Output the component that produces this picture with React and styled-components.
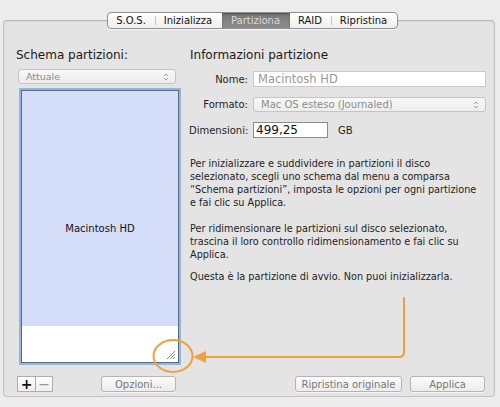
import React from "react";
import styled, { createGlobalStyle } from "styled-components";

const GlobalStyle = createGlobalStyle`
  html, body { margin: 0; padding: 0; background: #ececec; }
  body { font-family: "DejaVu Sans", "Liberation Sans", sans-serif; color: #1e1e1e; }
  * { box-sizing: border-box; }
`;

const Window = styled.div`
  position: relative;
  width: 500px;
  height: 407px;
  padding: 20px 5px 10px 3px;
  background: #ececec;
`;

const Panel = styled.div`
  height: 100%;
  display: flex;
  flex-direction: column;
  border: 1px solid #c2c2c2;
  border-top-color: #b6b6b6;
  border-radius: 4px;
  background: #e4e4e4;
  box-shadow: inset 0 1px 2px rgba(0, 0, 0, 0.05);
  padding: 0 9px 4px 12px;
`;

const TabBar = styled.div`
  align-self: center;
  display: flex;
  height: 17px;
  margin-top: -9px;
  margin-left: 3px;
  border: 1px solid #8f8f8f;
  border-radius: 4px;
  background: linear-gradient(#ffffff, #eeeeee);
  box-shadow: 0 1px 0 rgba(255, 255, 255, 0.7);
  overflow: hidden;
`;

const Tab = styled.div`
  position: relative;
  width: ${(p) => p.$w}px;
  display: flex;
  align-items: center;
  justify-content: center;
  font-size: 10px;
  color: ${(p) => (p.$active ? "#d9d9d9" : "#111")};
  background: ${(p) =>
    p.$active ? "linear-gradient(#767676, #8e8e8e)" : "transparent"};
  box-shadow: ${(p) => (p.$active ? "inset 0 1px 2px rgba(0,0,0,0.35)" : "none")};
  &::before {
    content: "";
    display: ${(p) => (p.$sep ? "block" : "none")};
    position: absolute;
    left: 0;
    top: 3px;
    bottom: 3px;
    width: 1px;
    background: #c6c6c6;
  }
`;

const Body = styled.div`
  flex: 1;
  margin-top: 18px;
  display: grid;
  grid-template-columns: 164px 297px;
  grid-template-rows: 1fr auto;
  column-gap: 9px;
  row-gap: 12px;
`;

const Column = styled.div`
  display: flex;
  flex-direction: column;
  min-height: 0;
`;

const Heading = styled.div`
  font-size: 12px;
  line-height: 16px;
  height: 16px;
  color: #1a1a1a;
  margin-left: ${(p) => p.$indent || 0}px;
`;

const Popup = styled.div`
  position: relative;
  display: flex;
  align-items: center;
  height: ${(p) => p.$h}px;
  margin: ${(p) => p.$m || "0"};
  width: ${(p) => (p.$w ? `${p.$w}px` : "auto")};
  padding-left: ${(p) => p.$pad}px;
  border: 1px solid #c4c4c4;
  border-radius: 3px;
  background: linear-gradient(#f8f8f8, #ededed);
  font-size: ${(p) => p.$fs}px;
  color: #8c8c8c;
  white-space: nowrap;
`;

const Arrows = styled.svg`
  position: absolute;
  right: 6px;
  top: 50%;
  margin-top: -4px;
`;

const PartitionMap = styled.div`
  position: relative;
  flex: 1;
  margin: 6px 1px 1px 5px;
  display: flex;
  flex-direction: column;
  border: 1px solid #5c6a7c;
  box-shadow: 0 0 0 2px #93b5e1;
  background: #fff;
`;

const PartitionBlock = styled.div`
  height: 235px;
  display: flex;
  align-items: center;
  justify-content: center;
  padding-top: 40px;
  background: #d5def9;
  font-size: 10px;
  color: #111;
`;

const FreeSpace = styled.div`
  flex: 1;
  background: #fff;
`;

const Grip = styled.svg`
  position: absolute;
  right: 2px;
  bottom: 2px;
`;

const Footer = styled.div`
  display: flex;
  align-items: center;
  justify-content: ${(p) => p.$justify};
  gap: 8px;
  height: 16px;
  padding: ${(p) => p.$pad};
`;

const Segmented = styled.div`
  display: flex;
  height: 16px;
`;

const SegButton = styled.div`
  width: ${(p) => p.$w}px;
  display: flex;
  align-items: center;
  justify-content: center;
  border: 1px solid #adadad;
  border-left-width: ${(p) => (p.$first ? 1 : 0)}px;
  background: linear-gradient(#ffffff, #eeeeee);
  color: ${(p) => (p.$dim ? "#9a9a9a" : "#111")};
  font-size: 14px;
  font-weight: ${(p) => (p.$dim ? 400 : 700)};
  line-height: 1;
`;

const Button = styled.div`
  width: ${(p) => p.$w}px;
  height: 16px;
  display: flex;
  align-items: center;
  justify-content: center;
  border: 1px solid #b4b4b4;
  border-radius: 3px;
  background: linear-gradient(#fbfbfb, #ececec);
  box-shadow: 0 1px 0 rgba(255, 255, 255, 0.6);
  font-size: 10px;
  color: #777;
  white-space: nowrap;
`;

const Form = styled.div`
  margin-top: 8px;
  display: grid;
  grid-template-columns: 59px 1fr;
  column-gap: 5px;
  row-gap: 10px;
  align-items: center;
`;

const Label = styled.div`
  text-align: right;
  font-size: 10px;
  color: #1e1e1e;
  white-space: nowrap;
`;

const Field = styled.div`
  height: 16px;
  display: flex;
  align-items: center;
  padding-left: ${(p) => p.$pad}px;
  width: ${(p) => (p.$w ? `${p.$w}px` : "auto")};
  border: 1px solid ${(p) => (p.$enabled ? "#8d8d8d" : "#c9c9c9")};
  background: #fff;
  font-size: ${(p) => p.$fs}px;
  color: ${(p) => (p.$enabled ? "#111" : "#999")};
  white-space: nowrap;
`;

const SizeRow = styled.div`
  display: flex;
  align-items: center;
  gap: 10px;
`;

const Unit = styled.span`
  font-size: 10px;
  color: #1e1e1e;
`;

const Note = styled.p`
  margin: ${(p) => p.$top}px 0 0 1px;
  font-size: 9.7px;
  line-height: 13px;
  color: #1e1e1e;
  white-space: nowrap;
`;

const Annotation = styled.svg`
  position: absolute;
  left: 0;
  top: 0;
  pointer-events: none;
`;

const tabs = [
  { label: "S.O.S.", w: 47 },
  { label: "Inizializza", w: 67 },
  { label: "Partiziona", w: 68, active: true },
  { label: "RAID", w: 41 },
  { label: "Ripristina", w: 66 },
];

const UpDown = () => (
  <Arrows width="6" height="8" viewBox="0 0 6 8">
    <path d="M1 3 L3 1 L5 3" fill="none" stroke="#a0a0a0" strokeWidth="1" />
    <path d="M1 5 L3 7 L5 5" fill="none" stroke="#a0a0a0" strokeWidth="1" />
  </Arrows>
);

export default function App() {
  return (
    <>
      <GlobalStyle />
      <Window>
        <Panel>
          <TabBar>
            {tabs.map((t, i) => (
              <Tab
                key={t.label}
                $w={t.w}
                $active={t.active}
                $sep={i > 0 && !t.active && !tabs[i - 1].active}
              >
                {t.label}
              </Tab>
            ))}
          </TabBar>

          <Body>
            <Column>
              <Heading>Schema partizioni:</Heading>
              <Popup $h={15} $w={158} $m="6px 0 0 2px" $pad={7} $fs={9.5}>
                Attuale
                <UpDown />
              </Popup>
              <PartitionMap>
                <PartitionBlock>Macintosh HD</PartitionBlock>
                <FreeSpace />
                <Grip width="11" height="11" viewBox="0 0 11 11">
                  <path
                    d="M10 2 L2 10 M10 5 L5 10 M10 8 L8 10"
                    stroke="#8a8a8a"
                    strokeWidth="1"
                  />
                </Grip>
              </PartitionMap>
            </Column>

            <Column>
              <Heading $indent={1}>Informazioni partizione</Heading>
              <Form>
                <Label>Nome:</Label>
                <Field $pad={4} $fs={11.5}>Macintosh HD</Field>
                <Label>Formato:</Label>
                <Popup $h={15} $pad={7} $fs={10}>
                  Mac OS esteso (Journaled)
                  <UpDown />
                </Popup>
                <Label>Dimensioni:</Label>
                <SizeRow>
                  <Field $enabled $w={75} $pad={2} $fs={12}>499,25</Field>
                  <Unit>GB</Unit>
                </SizeRow>
              </Form>
              <Note $top={19}>
                Per inizializzare e suddividere in partizioni il disco
                <br />
                selezionato, scegli uno schema dal menu a comparsa
                <br />
                “Schema partizioni”, imposta le opzioni per ogni partizione
                <br />e fai clic su Applica.
              </Note>
              <Note $top={13}>
                Per ridimensionare le partizioni sul disco selezionato,
                <br />
                trascina il loro controllo ridimensionamento e fai clic su
                <br />
                Applica.
              </Note>
              <Note $top={9}>
                Questa è la partizione di avvio. Non puoi inizializzarla.
              </Note>
            </Column>

            <Footer $justify="space-between" $pad="0 4px 0 1px">
              <Segmented>
                <SegButton $first $w={19}>+</SegButton>
                <SegButton $dim $w={17}>−</SegButton>
              </Segmented>
              <Button $w={75}>Opzioni...</Button>
            </Footer>
            <Footer $justify="flex-end" $pad="0 1px 0 0">
              <Button $w={107}>Ripristina originale</Button>
              <Button $w={75}>Applica</Button>
            </Footer>
          </Body>
        </Panel>

        <Annotation width="500" height="407" viewBox="0 0 500 407">
          <ellipse
            cx="173"
            cy="356"
            rx="19.5"
            ry="16"
            fill="none"
            stroke="#f2a03c"
            strokeWidth="2"
          />
          <path
            d="M404 297 V352 Q404 357 399 357 H204"
            fill="none"
            stroke="#f2a03c"
            strokeWidth="2"
          />
          <polygon points="193,357 206,351 206,363" fill="#f2a03c" />
        </Annotation>
      </Window>
    </>
  );
}
